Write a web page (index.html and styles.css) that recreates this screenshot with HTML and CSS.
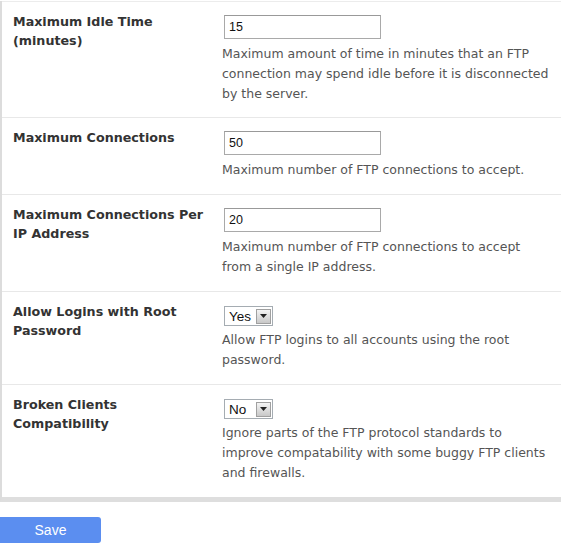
FILE: index.html
```html
<!DOCTYPE html>
<html>
<head>
<meta charset="utf-8">
<link rel="stylesheet" href="styles.css">
</head>
<body>
<div class="panel">
  <div class="row row-first">
    <div class="label">Maximum Idle Time (minutes)</div>
    <div class="field">
      <div class="input">15</div>
      <div class="desc">Maximum amount of time in minutes that an FTP connection may spend idle before it is disconnected by the server.</div>
    </div>
  </div>
  <div class="row">
    <div class="label">Maximum Connections</div>
    <div class="field">
      <div class="input">50</div>
      <div class="desc">Maximum number of FTP connections to accept.</div>
    </div>
  </div>
  <div class="row">
    <div class="label">Maximum Connections Per IP Address</div>
    <div class="field">
      <div class="input">20</div>
      <div class="desc">Maximum number of FTP connections to accept from a single IP address.</div>
    </div>
  </div>
  <div class="row">
    <div class="label">Allow Logins with Root Password</div>
    <div class="field">
      <div class="select"><span class="sel-text">Yes</span><span class="sel-btn"><svg width="7" height="4" viewBox="0 0 7 4"><path d="M0 0H7L3.5 4Z" fill="#222"/></svg></span></div>
      <div class="desc">Allow FTP logins to all accounts using the root password.</div>
    </div>
  </div>
  <div class="row">
    <div class="label">Broken Clients Compatibility</div>
    <div class="field">
      <div class="select"><span class="sel-text">No</span><span class="sel-btn"><svg width="7" height="4" viewBox="0 0 7 4"><path d="M0 0H7L3.5 4Z" fill="#222"/></svg></span></div>
      <div class="desc">Ignore parts of the FTP protocol standards to improve compatability with some buggy FTP clients and firewalls.</div>
    </div>
  </div>
</div>
<div class="actions">
  <button class="save">Save</button>
</div>
</body>
</html>
```
FILE: styles.css
```css
html, body {
  margin: 0;
  padding: 0;
  background: #fff;
}
body {
  font-family: "DejaVu Sans", Verdana, sans-serif;
  color: #444;
}
.panel {
  margin-top: 1px;
  border-left: 2px solid #dcdcdc;
  border-bottom: 5px solid #dedede;
}
.row {
  display: flex;
  border-top: 1px solid #e8e8e8;
  padding: 0 0 14px 0;
}
.row-first {
  border-top-color: #ececec;
  padding-bottom: 13px;
}
.label {
  width: 196px;
  padding: 11px 0 0 11px;
  font-weight: bold;
  font-size: 12.7px;
  line-height: 18.5px;
  color: #333;
}
.field {
  padding: 13px 0 0 13px;
  width: 329px;
}
.input {
  width: 151px;
  height: 22px;
  margin-left: 2px;
  border: 1px solid #a9a9a9;
  border-top-color: #999;
  font-family: "Liberation Sans", Arial, sans-serif;
  font-size: 12.5px;
  line-height: 22px;
  padding-left: 4px;
  color: #111;
}
.desc {
  margin-top: 5px;
  font-size: 12.5px;
  line-height: 20px;
  color: #555;
}
.select {
  display: inline-flex;
  align-items: center;
  height: 18px;
  margin-left: 2px;
  margin-top: 1px;
  border: 1px solid #a5acb2;
  font-family: "Liberation Sans", Arial, sans-serif;
  font-size: 13.5px;
  color: #111;
  vertical-align: top;
}
.select + .desc {
  margin-top: 4px;
}
.sel-text {
  padding: 0 5px 0 4px;
  min-width: 22px;
}
.sel-btn {
  width: 15px;
  height: 15px;
  margin-right: 1px;
  border: 1px solid #a0a0a0;
  background: linear-gradient(#f4f4f4, #c8c8c8);
  display: flex;
  align-items: center;
  justify-content: center;
  box-sizing: border-box;
}
.actions {
  padding-top: 15px;
}
.save {
  width: 101px;
  height: 26px;
  border: none;
  border-radius: 0 3px 3px 0;
  background: #5b8ef0;
  color: #fff;
  font-family: "Liberation Sans", Arial, sans-serif;
  font-size: 14px;
  padding: 0;
  margin: 0;
}
```
